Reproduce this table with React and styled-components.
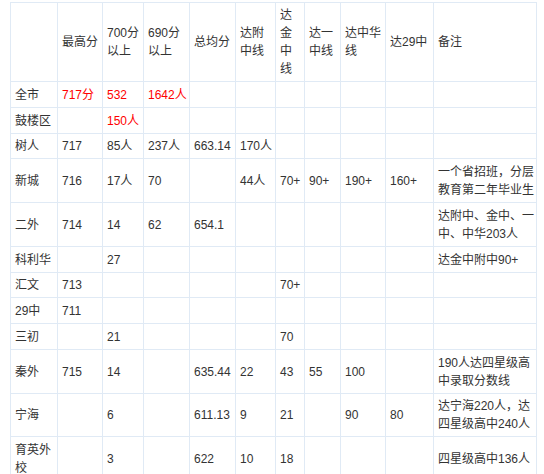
import React from 'react';
import styled, {createGlobalStyle} from 'styled-components';

const GlobalStyle = createGlobalStyle`
    body {
        margin: 0;
        background: #ffffff;
        font-family: "Liberation Sans", "Noto Sans CJK SC", sans-serif;
    }
`;

const Table = styled.table`
    margin: 2px 0 0 10px;
    border-collapse: collapse;
    table-layout: fixed;
    width: 526px;
    font-size: 12px;
    line-height: 18px;
    color: #333333;
`;

const HeadCell = styled.th`
    border: 1px solid #e0eaf5;
    padding: 3px 2px 3px 4px;
    font-weight: normal;
    text-align: left;
    vertical-align: middle;
    word-break: break-all;
`;

const Cell = styled.td`
    border: 1px solid #e0eaf5;
    padding: 3.75px 2px 3px 4px;
    text-align: left;
    vertical-align: middle;
    word-break: break-all;
    color: ${props => props.$red ? '#ff0000' : 'inherit'};
`;

const widths = [47, 45, 41, 46, 46, 40, 29, 36, 45, 48, 103];

const headers = ['', '最高分', '700分以上', '690分以上', '总均分', '达附中线', '达金中线', '达一中线', '达中华线', '达29中', '备注'];

// red marks the city-wide figures
const rows = [
    {cells: ['全市', '717分', '532', '1642人'], red: [1, 2, 3]},
    {cells: ['鼓楼区', '', '150人'], red: [2]},
    {cells: ['树人', '717', '85人', '237人', '663.14', '170人']},
    {cells: ['新城', '716', '17人', '70', '', '44人', '70+', '90+', '190+', '160+', '一个省招班，分层教育第二年毕业生']},
    {cells: ['二外', '714', '14', '62', '654.1', '', '', '', '', '', '达附中、金中、一中、中华203人']},
    {cells: ['科利华', '', '27', '', '', '', '', '', '', '', '达金中附中90+']},
    {cells: ['汇文', '713', '', '', '', '', '70+']},
    {cells: ['29中', '711']},
    {cells: ['三初', '', '21', '', '', '', '70']},
    {cells: ['秦外', '715', '14', '', '635.44', '22', '43', '55', '100', '', '190人达四星级高中录取分数线']},
    {cells: ['宁海', '', '6', '', '611.13', '9', '21', '', '90', '80', '达宁海220人，达四星级高中240人']},
    {cells: ['育英外校', '', '3', '', '622', '10', '18', '', '', '', '四星级高中136人']},
];

const App = () => {
    return (
        <>
            <GlobalStyle/>
            <Table>
                <colgroup>
                    {widths.map((w, i) => <col key={i} style={{width: w}}/>)}
                </colgroup>
                <thead>
                    <tr>
                        {headers.map((h, i) => <HeadCell key={i}>{h}</HeadCell>)}
                    </tr>
                </thead>
                <tbody>
                    {rows.map((row, r) => (
                        <tr key={r}>
                            {widths.map((w, i) => (
                                <Cell key={i} $red={row.red && row.red.includes(i)}>
                                    {row.cells[i] || ''}
                                </Cell>
                            ))}
                        </tr>
                    ))}
                </tbody>
            </Table>
        </>
    )
};

export default App;
